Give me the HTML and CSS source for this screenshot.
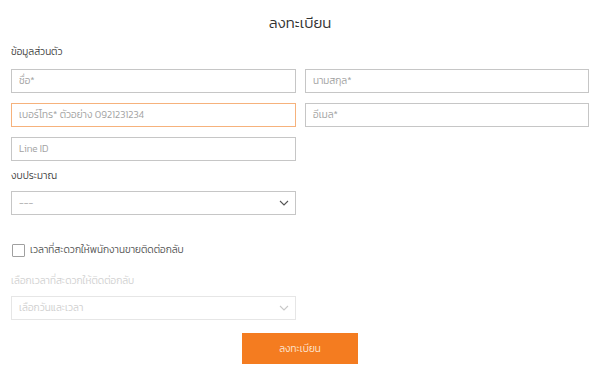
FILE: index.html
```html
<!DOCTYPE html>
<html lang="th">
<head>
<meta charset="utf-8">
<link rel="stylesheet" href="styles.css">
</head>
<body>
<div class="page">
  <h1 class="title">ลงทะเบียน</h1>
  <div class="section-label">ข้อมูลส่วนตัว</div>
  <div class="grid">
    <div class="field"><span class="ph">ชื่อ*</span></div>
    <div class="field"><span class="ph">นามสกุล*</span></div>
    <div class="field focus"><span class="ph">เบอร์โทร* ตัวอย่าง 0921231234</span></div>
    <div class="field"><span class="ph">อีเมล*</span></div>
    <div class="field"><span class="ph">Line ID</span></div>
  </div>
  <div class="label budget">งบประมาณ</div>
  <div class="half">
    <div class="field select"><span class="ph">---</span>
      <svg class="chev" width="10" height="6" viewBox="0 0 10 6"><path d="M1 1 L5 5 L9 1" fill="none" stroke="#555" stroke-width="1.1"/></svg>
    </div>
  </div>
  <div class="check-row">
    <span class="box"></span>
    <span class="check-text">เวลาที่สะดวกให้พนักงานขายติดต่อกลับ</span>
  </div>
  <div class="label disabled-label">เลือกเวลาที่สะดวกให้ติดต่อกลับ</div>
  <div class="half">
    <div class="field select disabled"><span class="ph">เลือกวันและเวลา</span>
      <svg class="chev" width="10" height="6" viewBox="0 0 10 6"><path d="M1 1 L5 5 L9 1" fill="none" stroke="#c8c8c8" stroke-width="1.1"/></svg>
    </div>
  </div>
  <div class="actions">
    <div class="btn">ลงทะเบียน</div>
  </div>
</div>
</body>
</html>
```
FILE: styles.css
```css
* { box-sizing: border-box; }
html, body { margin: 0; padding: 0; background: #fff; }
body { font-family: "Kanit", "Noto Sans Thai", "Noto Sans", sans-serif; font-weight: 300; color: #333; }
.page { width: 600px; height: 373px; padding: 0 11px; }
.title { margin: 13px 0 0; font-size: 15px; line-height: 20px; font-weight: 300; text-align: center; color: #333; }
.section-label { margin-top: 12px; font-size: 10px; line-height: 14px; color: #444; }
.grid { margin-top: 10px; display: grid; grid-template-columns: 285px 284px; column-gap: 9px; row-gap: 10px; }
.field { height: 24px; border: 1px solid #c6c6c6; display: flex; align-items: center; padding: 0 7px; position: relative; background: #fff; }
.field.focus { border-color: #f6b27c; }
.ph { font-size: 10px; color: #a2a2a2; line-height: 14px; }
.label { font-size: 10px; line-height: 14px; }
.budget { margin-top: 8px; color: #444; }
.half { width: 285px; margin-top: 8px; }
.select { justify-content: space-between; padding-right: 6px; }
.chev { display: block; }
.check-row { margin-top: 28px; display: flex; align-items: center; gap: 5px; padding-left: 1px; height: 14px; }
.box { width: 13px; height: 13px; border: 1px solid #a0a0a0; border-radius: 1px; background: #fff; }
.check-text { font-size: 10px; line-height: 14px; color: #555; }
.disabled-label { margin-top: 17px; color: #d2d2d2; }
.disabled-label + .half { margin-top: 8px; }
.field.disabled { border-color: #e6e6e6; }
.disabled .ph { color: #d0d0d0; }
.actions { margin-top: 13px; display: flex; justify-content: center; }
.btn { width: 116px; height: 31px; background: #f47c20; color: #fde7d4; font-size: 10px; display: flex; align-items: center; justify-content: center; }
```
